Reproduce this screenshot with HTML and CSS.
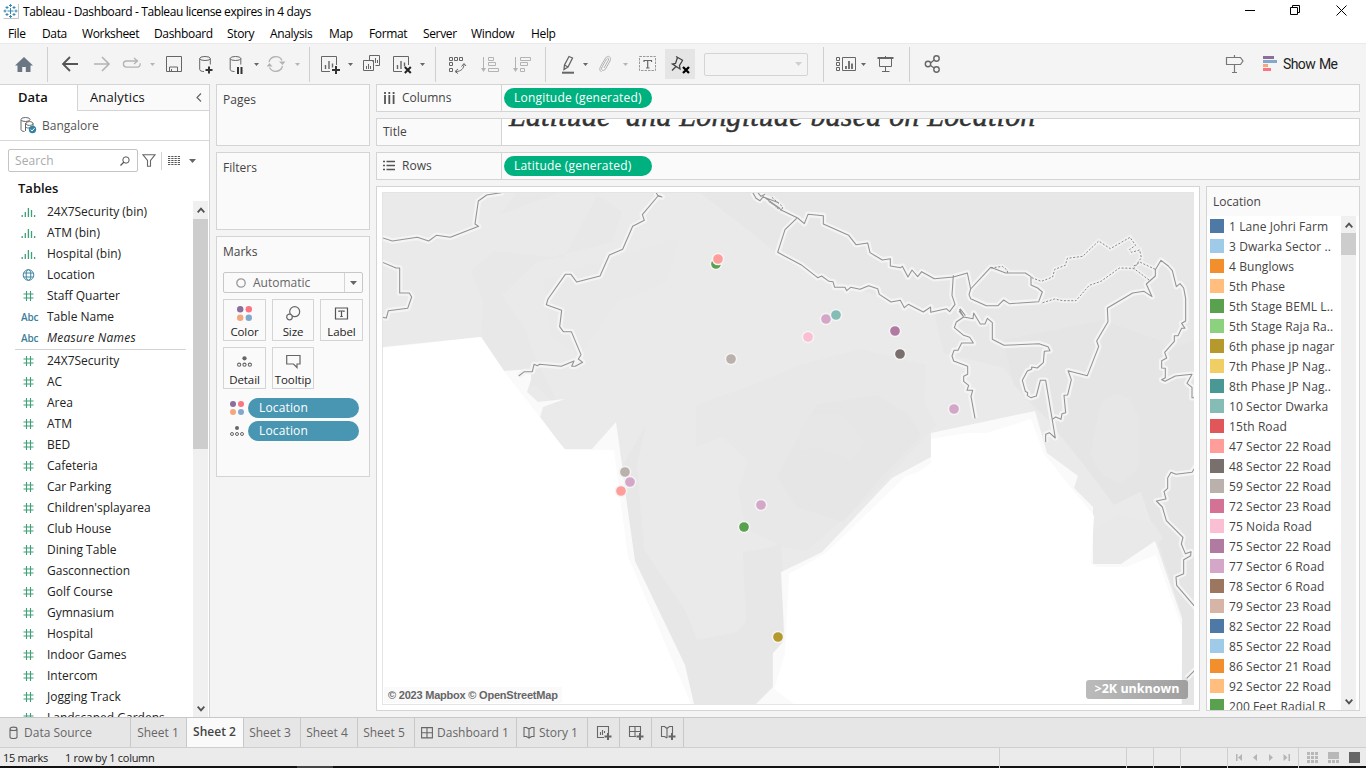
FILE: index.html
```html
<!DOCTYPE html>
<html lang="en">
<head>
<meta charset="utf-8">
<title>Tableau - Dashboard</title>
<link rel="stylesheet" href="styles.css">
</head>
<body>
<svg class="defs" width="0" height="0">
  <symbol id="hash" viewBox="0 0 12 12"><path d="M4 1v10M8 1v10M1 4h10M1 8h10" fill="none" stroke="#3fa078" stroke-width="1.1"/></symbol>
  <symbol id="bin" viewBox="0 0 14 12"><path d="M.7 9v2M3.8 6v5M6.9 2v9M10 4v7M13.1 9v2" fill="none" stroke="#3fa078" stroke-width="1.3"/></symbol>
  <symbol id="globe" viewBox="0 0 12 12"><g fill="none" stroke="#3e86a0"><circle cx="6" cy="6" r="5.300"/><ellipse cx="6" cy="6" rx="2.300" ry="5.300"/><path d="M1.500 4h9M1.500 8h9"/></g></symbol>
  <symbol id="caret" viewBox="0 0 7 4"><path d="M0 0h7L3.500 4z" fill="currentColor"/></symbol>
  <symbol id="up" viewBox="0 0 8 6"><path d="M.7 5.300L4 1.700l3.300 3.600" fill="none" stroke="#505050" stroke-width="1.800"/></symbol>
  <symbol id="down" viewBox="0 0 8 6"><path d="M.7.7L4 4.300 7.300.7" fill="none" stroke="#505050" stroke-width="1.800"/></symbol>
  <symbol id="dots4" viewBox="0 0 14 14"><circle cx="3" cy="3" r="3" fill="#8a6f9c"/><circle cx="11" cy="3" r="3" fill="#fb7482"/><circle cx="3" cy="11" r="3" fill="#f4a77b"/><circle cx="11" cy="11" r="3" fill="#84a7cd"/></symbol>
  <symbol id="detail" viewBox="0 0 14 12"><circle cx="7" cy="3" r="2" fill="#666"/><g fill="none" stroke="#666"><circle cx="2" cy="9" r="1.500"/><circle cx="7" cy="9" r="1.500"/><circle cx="12" cy="9" r="1.500"/></g></symbol>
</svg>

<header class="titlebar">
  <svg class="logo" viewBox="0 0 16 16" width="16" height="16"><path d="M.5 15.500h15V1" fill="none" stroke="#c4c4c4"/><path d="M7.500 5v6M4.500 8h6M7.500 1v3M6 2.500h3M7.500 12v3M6 13.500h3M2 6.500v3M.5 8h3M13 6.500v3M11.500 8h3M4 3v3M2.500 4.500h3M11 3v3M9.500 4.500h3M4 10v3M2.500 11.500h3M11 10v3M9.500 11.500h3" fill="none" stroke="#3889b3"/></svg>
  <span class="apptitle">Tableau - Dashboard - Tableau license expires in 4 days</span>
  <svg class="winbtns" viewBox="1240 0 126 22" width="126" height="22" fill="none" stroke="#000"><path d="M1245 10.500h10M1290.500 7.500h7v7h-7zM1292.500 7v-1.500h7v7h-2M1336.500 5.500l10 10M1346.500 5.500l-10 10"/></svg>
</header>
<nav class="menu">
  <span>File</span><span>Data</span><span>Worksheet</span><span>Dashboard</span><span>Story</span><span>Analysis</span><span>Map</span><span>Format</span><span>Server</span><span>Window</span><span>Help</span>
</nav>

<div class="toolbar">
  <svg viewBox="14 54 20 20"><path d="M15 65.500L24 57l9 8.500h-2.500V72h-4.700v-5h-3.600v5h-4.700v-6.500z" fill="#6b7683" stroke="none"/></svg>
  <i class="sep"></i>
  <svg viewBox="61 54 20 20"><path d="M78 64H63M70 57l-7 7 7 7" stroke="#555" stroke-width="1.800"/></svg>
  <svg viewBox="93 54 20 20" class="off"><path d="M94 64h15M102 57l7 7-7 7" stroke-width="1.600"/></svg>
  <svg viewBox="122 54 20 20" class="off"><path d="M137 61h-10.500a3 3 0 0 0 0 6.200h10.500a3 3 0 0 0 3-4M134 58l3.500 3-3.500 3" stroke-width="1.300"/></svg>
  <svg class="dd off"><use href="#caret"/></svg>
  <svg viewBox="165 54 20 20"><path d="M166.500 56.500h15v15h-15zM169.500 71v-4h8v4M171.500 69v2"/></svg>
  <svg viewBox="197 54 20 20"><ellipse cx="205" cy="58.500" rx="5.300" ry="2"/><path d="M199.700 58.500v11c0 1.200 1.800 2 4.300 2M210.300 58.500v6"/><path d="M209 66.500v7M205.500 70h7" stroke="#333" stroke-width="2"/></svg>
  <svg viewBox="228 54 20 20"><ellipse cx="235.500" cy="58.500" rx="5.300" ry="2"/><path d="M230.200 58.500v11c0 1.200 1.800 2 4.300 2M240.800 58.500v6"/><path d="M238 67v7M241.500 67v7" stroke="#333" stroke-width="2"/></svg>
  <svg class="dd"><use href="#caret"/></svg>
  <svg viewBox="267 54 20 20" class="off"><path d="M269 62a7 7 0 0 1 13-1.500M282.500 66a7 7 0 0 1-13 1.500" stroke-width="1.300"/><path d="M279 61.500h6.500l-3 3.500zM266.500 66.500h6l-3-3.500z" fill="#b3b3b3" stroke="none"/></svg>
  <svg class="dd off"><use href="#caret"/></svg>
  <i class="sep"></i>
  <svg viewBox="320 54 20 20"><path d="M330 71.500h-8.500v-15h15v8.500"/><path d="M325.500 65v4M329 61v8M332.500 63.500v4" stroke-width="1.400"/><path d="M336 66v8M332 70h8" stroke="#333" stroke-width="2"/></svg>
  <svg class="dd"><use href="#caret"/></svg>
  <svg viewBox="362 54 20 20"><path d="M369.500 60v-4.500h10v10h-4M363.500 60.500h10v10h-10zM366.500 66v3M368.500 64v5M370.500 66v3M373 60v2M375.500 58v5M377.500 60v3"/></svg>
  <svg viewBox="392 54 20 20"><path d="M402 71.500h-8.500v-15h15v8.500"/><path d="M397.500 65v4M401 61v8M404.500 62.500v4" stroke-width="1.400"/><path d="M404.800 67l6 6M410.800 67l-6 6" stroke="#222" stroke-width="2"/></svg>
  <svg class="dd"><use href="#caret"/></svg>
  <i class="sep"></i>
  <svg viewBox="448 54 20 20"><path d="M449.500 57.500h3v3h-3zM454.500 57.500h3v3h-3zM459.500 57.500h3v3h-3zM449.500 62.500h3v3h-3zM449.500 68.500h3v3h-3zM464 64c0 4.500-3 7.500-8 7.500M461.500 66.500l2.500-3 2 2.500M458 69l-3 2.500 3 2"/></svg>
  <svg viewBox="480 54 20 20" class="off"><path d="M483.500 57v13M488.500 57.500h5v3h-5zM488.500 62.500h7v3h-7zM488.500 68.500h10v3h-10z"/><path d="M481 68h5l-2.500 4z" fill="#b3b3b3" stroke="none"/></svg>
  <svg viewBox="512 54 20 20" class="off"><path d="M515.500 57v13M520.500 57.500h10v3h-10zM520.500 62.500h7v3h-7zM520.500 68.500h4v3h-4z"/><path d="M513 68h5l-2.500 4z" fill="#b3b3b3" stroke="none"/></svg>
  <i class="sep"></i>
  <svg viewBox="561 54 20 20"><path d="M569 56.500l3.500 1.500-4.500 9-4 2.500.5-4.500zM564.500 65l3.500 2" stroke-width="1.300"/><path d="M562 72.700h12" stroke-width="2"/></svg>
  <svg class="dd"><use href="#caret"/></svg>
  <svg viewBox="598 54 20 20" class="off"><path d="M604 68l4.500-8c.9-2-1-2.500-1.900-1l-4.600 8c-1.500 3 1.500 5 3.500 2l4.500-8c2-4-2-6.500-4.500-3l-5 8.500c-1.500 3-.5 5 1 5"/></svg>
  <svg class="dd off"><use href="#caret"/></svg>
  <svg viewBox="638 54 20 20"><rect x="639.500" y="56.500" width="16" height="14" stroke="#999" stroke-dasharray="2.500 1"/><path d="M644 62v-1.500h7.500v1.500M647.700 60.500v7.500M646 68h3.500" stroke-width="1.200"/></svg>
  <span class="pin"><svg viewBox="670 54 20 20"><path d="M676 56.500l7 4M677.500 57.500l-2 6-3 .5 7.500 5-.5-3.500 3-5M676 66.500l-4 4" stroke="#444" stroke-width="1.300"/><path d="M683 67l6 6M689 67l-6 6" stroke="#000" stroke-width="2.300"/></svg></span>
  <span class="select"><svg class="dd"><use href="#caret"/></svg></span>
  <i class="sep"></i>
  <svg class="wide" viewBox="835 54 22 20"><path d="M836.500 57.500h3v3h-3zM836.500 62.500h3v3h-3zM836.500 67.500h3v3h-3zM842.500 57.500h13v13h-13z"/><path d="M846 66v3M849 61v8M852 63.500v5.500" stroke-width="1.800"/></svg>
  <svg class="dd"><use href="#caret"/></svg>
  <svg viewBox="876 54 20 20"><path d="M877.500 58h16" stroke-width="2"/><path d="M879.500 58v8.500h12V58M885.500 56v2M885.500 67v5M882 71.500h7.500"/></svg>
  <i class="sep"></i>
  <svg viewBox="924 54 20 20"><g stroke-width="1.400"><circle cx="936.500" cy="58.500" r="2.700"/><circle cx="928" cy="64" r="2.700"/><circle cx="936.500" cy="69.500" r="2.700"/><path d="M930.500 63l3.700-3M930.500 65.500l3.700 2.500"/></g></svg>
  <svg viewBox="1225 54 20 20"><path d="M1226.500 57.500h14l2.500 3.500-2.500 3.500h-14zM1234.500 55v2.500M1234.500 64.500v7.500M1232 72.500h5" stroke="#777" stroke-width="1.200"/></svg>
  <span class="showme"><svg width="16" height="16" viewBox="0 0 16 16" stroke="none"><path d="M1 0h11v3H1z" fill="#8a6f9c"/><path d="M1 4h14v3H1z" fill="#84a7cd"/><path d="M1 8h5v3H1z" fill="#f4a77b"/><path d="M1 12h8v3H1z" fill="#fb7482"/></svg><b>Show Me</b></span>
</div>

<main class="work">
  <aside class="data">
    <div class="ptabs"><b>Data</b><span>Analytics<svg width="6" height="9" viewBox="0 0 6 9"><path d="M5 .5l-4 4 4 4" fill="none" stroke="#666" stroke-width="1.200"/></svg></span></div>
    <div class="source"><svg width="18" height="17" viewBox="0 0 18 17"><g fill="none" stroke="#666"><ellipse cx="5.500" cy="2.500" rx="4.500" ry="2"/><path d="M1 3v9.500c0 1 1.500 2 3.500 2M6 6.500c0-2.500 7-2.500 7 0s-7 2.500-7 0M5.500 6v8M13 6.500V9M5.500 9.500c1 2 3 1.500 4 1.300"/></g><circle cx="12.500" cy="12.500" r="3.700" fill="#3483a2"/><path d="M10.700 12.500l1.400 1.500 2.400-2.800" fill="none" stroke="#fff"/></svg><span>Bangalore</span></div>
    <div class="searchrow">
      <div class="search"><span>Search</span><svg width="10" height="10" viewBox="0 0 10 10"><path d="M4 6L.5 9.500" stroke="#555" stroke-width="1.200"/><circle cx="6" cy="4" r="3.200" fill="none" stroke="#555"/></svg></div>
      <svg class="funnel" width="14" height="13" viewBox="0 0 14 13"><path d="M.8.7h12.400L8.500 6.500v5.700h-3V6.500z" fill="none" stroke="#666" stroke-width="1.100"/></svg>
      <i></i>
      <svg class="grid" width="12" height="10" viewBox="0 0 12 10"><path d="M0 .5h12M0 2.500h12M0 4.500h12M0 6.500h12M0 8.500h12" stroke="#555" stroke-dasharray="2.250 1" stroke-width="1"/></svg>
      <svg class="dd"><use href="#caret"/></svg>
    </div>
    <h3>Tables</h3>
    <div class="fieldwrap">
      <ul class="fields">
        <li><svg><use href="#bin"/></svg>24X7Security (bin)</li>
        <li><svg><use href="#bin"/></svg>ATM (bin)</li>
        <li><svg><use href="#bin"/></svg>Hospital (bin)</li>
        <li><svg><use href="#globe"/></svg>Location</li>
        <li><svg><use href="#hash"/></svg>Staff Quarter</li>
        <li><em class="abc">Abc</em>Table Name</li>
        <li class="it"><em class="abc">Abc</em>Measure Names</li>
        <li class="line"></li>
        <li><svg><use href="#hash"/></svg>24X7Security</li>
        <li><svg><use href="#hash"/></svg>AC</li>
        <li><svg><use href="#hash"/></svg>Area</li>
        <li><svg><use href="#hash"/></svg>ATM</li>
        <li><svg><use href="#hash"/></svg>BED</li>
        <li><svg><use href="#hash"/></svg>Cafeteria</li>
        <li><svg><use href="#hash"/></svg>Car Parking</li>
        <li><svg><use href="#hash"/></svg>Children'splayarea</li>
        <li><svg><use href="#hash"/></svg>Club House</li>
        <li><svg><use href="#hash"/></svg>Dining Table</li>
        <li><svg><use href="#hash"/></svg>Gasconnection</li>
        <li><svg><use href="#hash"/></svg>Golf Course</li>
        <li><svg><use href="#hash"/></svg>Gymnasium</li>
        <li><svg><use href="#hash"/></svg>Hospital</li>
        <li><svg><use href="#hash"/></svg>Indoor Games</li>
        <li><svg><use href="#hash"/></svg>Intercom</li>
        <li><svg><use href="#hash"/></svg>Jogging Track</li>
        <li><svg><use href="#hash"/></svg>Landscaped Gardens</li>
      </ul>
      <div class="scroll"><svg><use href="#up"/></svg><div class="thumb tall"></div><svg class="end"><use href="#down"/></svg></div>
    </div>
  </aside>

  <section class="cards">
    <div class="card pages">Pages</div>
    <div class="card filters">Filters</div>
    <div class="card marks">Marks
      <div class="marktype"><svg width="10" height="10" viewBox="0 0 10 10"><circle cx="5" cy="5" r="4.200" fill="none" stroke="#999" stroke-width="1.300"/></svg><span>Automatic</span><u><svg class="dd"><use href="#caret"/></svg></u></div>
      <div class="markbtns">
        <div><svg width="15" height="15"><use href="#dots4"/></svg>Color</div>
        <div><svg width="15" height="15" viewBox="0 0 15 15"><g fill="none" stroke="#666" stroke-width="1.200"><circle cx="8.700" cy="5.700" r="5"/><circle cx="3.500" cy="11" r="2.800" fill="#fafafa"/></g></svg>Size</div>
        <div><svg width="15" height="15" viewBox="0 0 15 15"><path d="M1.500 2h12v11h-12zM5 6V5h5v1M7.500 5v5.500M6.200 10.500h2.600" fill="none" stroke="#555" stroke-width="1.200"/></svg>Label</div>
        <div><svg width="15" height="15"><use href="#detail"/></svg>Detail</div>
        <div><svg width="15" height="15" viewBox="0 0 15 15"><path d="M.7 1.500h13.300v8.500h-3v3.500L7.500 10H.7z" fill="none" stroke="#666" stroke-width="1.200"/></svg>Tooltip</div>
      </div>
      <div class="mp"><svg width="14" height="14"><use href="#dots4"/></svg><span>Location</span></div>
      <div class="mp"><svg width="14" height="12"><use href="#detail"/></svg><span>Location</span></div>
    </div>
  </section>

  <section class="sheet">
    <div class="shelf"><label><svg width="12" height="12" viewBox="0 0 12 12"><path d="M2 0v2M2 3v9M6.300 0v2M6.300 3v9M10.600 0v2M10.600 3v9" stroke="#555" stroke-width="1.800"/></svg>Columns</label><span class="pill">Longitude (generated)</span></div>
    <div class="shelf title"><label>Title</label><h1>Latitude  and Longitude based on Location</h1></div>
    <div class="shelf"><label><svg width="12" height="12" viewBox="0 0 12 12"><path d="M0 1.500h2M3.500 1.500H12M0 5.500h2M3.500 5.500H12M0 9.500h2M3.500 9.500H12" stroke="#555" stroke-width="1.700"/></svg>Rows</label><span class="pill">Latitude (generated)</span></div>
    <div class="viewrow">
      <div class="view">
        <div class="map">
          <svg viewBox="383 193 811 512" width="811" height="512">
            <rect x="383" y="193" width="811" height="512" fill="#eaeaea"/>
            <!-- terrain shading -->
            <g fill="#e7e7e7">
              <path d="M500 215l12-5 50-18h30l30 20-10 30-60 15-22-2-36-4-23 20 12 30-3 50 20 42 36-7 25 24-29-60-6-20-24-35 36-34 26-4 30-55 20-60h-60z" fill="#e8e8e8"/>
              <path d="M700 193h494v250l-45-20-60 30-55-45-30-40-60-15-10-40-65-20-80-30-50-40z" fill="#e7e7e7"/>
              <path d="M640 250l40-12-15 45-50 20-35 52-30-20-6-56z" fill="#e9e9e9"/>
              <path d="M696 405l56-20 48-20 60-16 66 16-2 38 12 22-60 66-70 60-22-4-38-18-8-38 10-30-26-24-26 10z" fill="#e8e8e8"/>
              <path d="M623 465l23-40-9 40 7 85 41 60 12 30 40-8 9-10-3-70 30-5 8-5 4 56-3 45-10 12v32l-18 20h-78l-8-40-51-103z"/>
              <path d="M1040 400l154-60v365h-12v-90l-27-81-15-45-65-50z" fill="#e5e5e5"/>
            </g>
            <g fill="#e5e5e5">
              <path d="M797 440l20-35 60-10 32 20 12 20-40 42-38 45-46-15-20-30z" fill="#e6e6e6"/>
              <path d="M1003 340l100-20 55 20 36 30v75l-20 30-60 30-30-40-40-50-30-30z"/>
            </g>
            <g fill="#e7e7e7">
              <path d="M1101 402l14-8 14 4 10 20v50l-18 16-19-9-12-20z"/><path d="M800 430l12-16h30l24 28-14 18-35-12-17 2z"/>
            </g>
            <path d="M1093 530l25-15 35 8 10 15-8 10-34 20h-28z" fill="#e9e9e9"/>
            <!-- coastal shallows -->
            <g fill="#fafafa">
              <path d="M383 347l98-10 23 34 27-2v11l-4 12 11 10 27-3-22 8-4 14 26 28h27l24-27 6 43 4 32 9 64 50 104 9 39H383z"/>
              <path d="M756 704l17-17v-34l10-11 1-12-3-58 25-12 16-8 70-74 39-21v-24l104-22 12 42 31 23-4 12 19 19v57h28l34-23 27 78v85z"/>
            </g>
            <!-- open sea -->
            <g fill="#fff">
              <path d="M383 348l98-11 23 34 9 12 27 34 25 33h49l6 47 8 60 64 149H383z"/>
              <path d="M794 704l-20-15 11-35 4-80 25-14 14-9 78-75 12-4 13-9v-24l36-6 20 0 44-14 13 35 50 62-3 48 7 3h28l30-12 26 73-1 79z"/>
            </g>
            <!-- borders: pale halo below, thin line above -->
            <defs>
              <g id="borders" fill="none" stroke-linejoin="round">
                <g transform="translate(376 84) scale(.33333)">
                  <path d="M15 460l34 11 75-11 34 11 23-17 42 6 85-33-11-7 10-69 25-18 50-8M15 533l45 19h11v75h29l7 12-12 34-58 7-6 22-16-3M840 325l5 9 13 5-12-3-47 56 6 17-35 18-30 69-40 17-28 63-70 18-17-23h-17l-52 74-5 17 46 17-6 49 11 15h24l29 69-8 13 13 10-22 12h-11l7-16-38 16-65-6-7 4-10-4-5 22h-24l-17 13M1130 325l10 18 12 7 10-12 50 35M1160 338l48 18M1145 325l10 12 12-6"/>
                </g>
                <g transform="translate(776 180) scale(.33333)">
                  <path d="M-22 64L20 92l45 22 20 17 11-28 46 4v25l76 34 22 28 35-5 7 29 37 22 24-4v22l31 5 5-4 17 32 12-21 17 20 12-15 38 21 57-5 42-12 10 48 60-65 45 17h59l17 11v25l20 9 14 12-11 29-88 6-17-11-17 17h-35l-47-21-5-12 5-17M62 115l-35 34L5 217l70 37 50 39 12-5 22 16 12 1 5 17h31l5 10 12-10 28 6 26-11 27 9 5 17 35 23 28-5 12 22 12-10 45 23 22-15v16l47-11 10 9 16-22-9-27 4-60M550 388l13 23 28 5 2-17 20 33h14l7-17 15 13v50l35 18 105-5 27 9 6 12-17 2-3 34-18 16-17-3v7l-13 5-15 28 9 33 7 4-1 9 10 6 17-5 12-47h16l29 173-18-16-11 5v23M829 718l10-7 16 7 3-17 11-3-5-52 11-1 11-46-10-27 58 15 34-87-6-17 34-58-2-41 76-45 34-5 24 16-17-38 27-24v-19l17-28 22 17 12 14 12 48 11-9 11 13 6 32v67l-12 7 10 15h-10l-11 22h-11v17l-29 33 6 17-15 8v22l11 1v28l-11 6 10 5 31-16 50-5-15 27 15 12v31h9M563 411l-22 15-6 17 28 23 18 6 11 17h-35l-11 22h-12l-6 17 5 15 42 16v24l-12 6v15l15 12-5 15h17l-5 18 12 66M563 411l-13-17 3-7 15 20"/>
                </g>
                <g transform="translate(800 400) scale(.33333)">
                  <path d="M1190 195l-14 22-48 6-15-6-10 17v31l-11 10 6 22-29 6 18 18 12 41 50 50-5 20 12 29 17-6-1 12-21 12v42l-23 10 2 25 60 70M1190 805l-30 30"/>
                </g>
              </g>
              <g id="disputed" fill="none">
                <path transform="translate(776 180) scale(.33333)" d="M-12 52l18 16 14 12-3 12-20-12M645 264l34-5 15 12 1 11M767 293l29 11 34-13 6-23 32-12 6-21 46-6 48-46 35 23 59-34 17 24-18 12 5 9 25-7 5 23-24 35M800 368l36-11 24 5h40l40-46 35-12 55-40 43 1 50 38M1073 258l20-11 45 21"/>
              </g>
            </defs>
            <use href="#borders" stroke="#f4f4f4" stroke-width="17"/>
            <use href="#disputed" stroke="#f1f1f1" stroke-width="14"/>
            <use href="#borders" stroke="#939393" stroke-width="3.200"/>
            <use href="#disputed" stroke="#888" stroke-width="3" stroke-dasharray="6 5"/>
            <g stroke="#f4f4f4" stroke-width="1.500">
              <circle cx="716" cy="264" r="5.600" fill="#59a14f"/><circle cx="718" cy="259" r="5.600" fill="#ff9d9a"/>
              <circle cx="826" cy="319" r="5.600" fill="#d4a6c8"/><circle cx="836" cy="315" r="5.600" fill="#86bcb6"/>
              <circle cx="808" cy="337" r="5.600" fill="#fabfd2"/><circle cx="895" cy="331" r="5.600" fill="#b07aa1"/>
              <circle cx="900" cy="354" r="5.600" fill="#79706e"/><circle cx="731" cy="359" r="5.600" fill="#bab0ac"/>
              <circle cx="954" cy="409" r="5.600" fill="#d4a6c8"/><circle cx="625" cy="472" r="5.600" fill="#bab0ac"/>
              <circle cx="630" cy="482" r="5.600" fill="#d4a6c8"/><circle cx="621" cy="491" r="5.600" fill="#ff9d9a"/>
              <circle cx="761" cy="505" r="5.600" fill="#d4a6c8"/><circle cx="744" cy="527" r="5.600" fill="#59a14f"/>
              <circle cx="778" cy="637" r="5.600" fill="#b6992d"/>
            </g>
          </svg>
          <div class="credit">© 2023 Mapbox © OpenStreetMap</div>
          <div class="unknown">&gt;2K unknown</div>
        </div>
      </div>
      <div class="legend">
        <h4>Location</h4>
        <div class="lwrap">
          <ul>
            <li><i class="c1"></i>1 Lane Johri Farm</li>
            <li><i class="c2"></i>3 Dwarka Sector ..</li>
            <li><i class="c3"></i>4 Bunglows</li>
            <li><i class="c4"></i>5th Phase</li>
            <li><i class="c5"></i>5th Stage BEML L..</li>
            <li><i class="c6"></i>5th Stage Raja Ra..</li>
            <li><i class="c7"></i>6th phase jp nagar</li>
            <li><i class="c8"></i>7th Phase JP Nag..</li>
            <li><i class="c9"></i>8th Phase JP Nag..</li>
            <li><i class="c10"></i>10 Sector Dwarka</li>
            <li><i class="c11"></i>15th Road</li>
            <li><i class="c12"></i>47 Sector 22 Road</li>
            <li><i class="c13"></i>48 Sector 22 Road</li>
            <li><i class="c14"></i>59 Sector 22 Road</li>
            <li><i class="c15"></i>72 Sector 23 Road</li>
            <li><i class="c16"></i>75 Noida Road</li>
            <li><i class="c17"></i>75 Sector 22 Road</li>
            <li><i class="c18"></i>77 Sector 6 Road</li>
            <li><i class="c19"></i>78 Sector 6 Road</li>
            <li><i class="c20"></i>79 Sector 23 Road</li>
            <li><i class="c1"></i>82 Sector 22 Road</li>
            <li><i class="c2"></i>85 Sector 22 Road</li>
            <li><i class="c3"></i>86 Sector 21 Road</li>
            <li><i class="c4"></i>92 Sector 22 Road</li>
            <li><i class="c5"></i>200 Feet Radial R</li>
          </ul>
          <div class="scroll"><svg><use href="#up"/></svg><div class="thumb short"></div><svg class="end"><use href="#down"/></svg></div>
        </div>
      </div>
    </div>
  </section>
</main>

<footer>
  <div class="tabs">
    <span><svg width="10" height="14" viewBox="0 0 10 14"><path d="M1 3c0-2.500 7-2.500 7 0v8c0 2-7 2-7 0zM1 3c0 2 7 2 7 0"/></svg>Data Source</span>
    <span class="first">Sheet 1</span><span class="on">Sheet 2</span><span>Sheet 3</span><span>Sheet 4</span><span>Sheet 5</span>
    <span class="ic"><svg width="12" height="12" viewBox="0 0 12 12"><path d="M.6.6h10.800v10.300H.6zM6 .6v10.300M.6 5.800h10.800"/></svg>Dashboard 1</span>
    <span class="ic"><svg width="12" height="13" viewBox="0 0 12 13"><path d="M6 3L3.500 1.500H1v9h2.500L6 12l2.500-1.500H11v-9H8.500zM6 3v9"/></svg>Story 1</span>
    <span class="new"><svg width="16" height="16" viewBox="0 0 16 16"><path d="M8 12.500H1.500v-11h11V8M4.500 7v3M6.500 5v5M8.500 6v2"/><path d="M12 8v7M8.500 11.500h7" stroke-width="2"/></svg></span>
    <span class="new"><svg width="16" height="16" viewBox="0 0 16 16"><path d="M8 11.500H1.500v-10h11V8M7 1.500v10M1.500 6.500h11"/><path d="M12 8v7M8.500 11.500h7" stroke-width="2"/></svg></span>
    <span class="new"><svg width="16" height="16" viewBox="0 0 16 16"><path d="M7 3.500L4.500 1.500H1.500v10h3L7 13M7 3.500l2.500-2h3V8M7 3.500V13"/><path d="M12 8v7M8.500 11.500h7" stroke-width="2"/></svg></span>
  </div>
  <div class="status">
    <span>15 marks</span><span>1 row by 1 column</span><i></i><i></i><i></i><i></i>
    <span class="nav"><svg width="70" height="18" viewBox="1228 748 70 18" fill="#b5b5b5"><path d="M1236 754h1.500v7H1236zM1242 754v7l-4-3.500zM1257 754v7l-4-3.500zM1269 754v7l4-3.500zM1283.500 754v7l4-3.500zM1288.500 754h1.500v7h-1.500z"/></svg></span>
    <span class="views"><svg width="67" height="18" viewBox="1299 748 67 18"><path d="M1307 753.500h11M1307 757.500h11M1307 761.500h11" stroke="#b8b8b8" stroke-width="3" stroke-dasharray="3 1"/><path d="M1328 752h11v7h-11z" fill="#b8b8b8"/><path d="M1328 761.500h11" stroke="#b8b8b8" stroke-width="3" stroke-dasharray="3 1"/><path d="M1349 752h11v11h-11z" fill="#666"/></svg></span>
  </div>
  <div class="task"><i></i></div>
</footer>
</body>
</html>
```
FILE: styles.css
```css
* { box-sizing: border-box; }
body { margin: 0; width: 1366px; height: 768px; overflow: hidden; display: flex; flex-direction: column; background: #f4f4f4; font: 12px/16px "Open Sans", "Noto Sans", sans-serif; color: #222; white-space: nowrap; }
ul { list-style: none; margin: 0; padding: 0; }
svg { display: block; flex: none; }
.defs { position: absolute; }

.titlebar { display: flex; height: 24px; flex: none; background: #fff; padding-left: 3px; color: #000; }
.logo { margin-top: 3px; }
.apptitle { margin: 4px auto 0 4px; letter-spacing: -0.38px; }
.menu { display: grid; grid-template-columns: 34px 40px 72px 73px 43px 59px 40px 54px 48px 60px 40px; height: 19px; flex: none; background: #fff; padding: 2px 0 0 8px; color: #000; letter-spacing: -0.35px; }

.toolbar { flex: none; height: 41px; border-top: 1px solid #eaeaea; display: grid; align-items: center; justify-items: start; padding-left: 14px; grid-template-columns: 33px 14px 32px 29px 27px 16px 32px 31px 25px 14px 27px 15px 11px 27px 15px 30px 27px 16px 13px 32px 32px 33px 16px 21px 16px 24px 16px 27px 39px 119px 12px 25px 16px 33px 15px 301px 37px 104px; }
.toolbar svg { width: 20px; height: 20px; fill: none; stroke: #666; }
.toolbar .wide { width: 22px; }
.toolbar .off { stroke: #b3b3b3; color: #b3b3b3; }
.sep { width: 1px; height: 35px; background: #cfcfcf; }
svg.dd, .toolbar svg.dd { width: 5px; height: 3px; stroke: none; color: #666; }
.toolbar svg.dd { margin-left: 1px; }
.toolbar svg.dd.off { color: #b5b5b5; }
.pin { width: 30px; height: 30px; background: #e5e5e5; padding: 5px; }
.select { width: 104px; height: 23px; border: 1px solid #d4d4d4; border-radius: 2px; display: flex; align-items: center; justify-content: flex-end; padding-right: 5px; }
.toolbar .select svg.dd { width: 7px; height: 4px; color: #cfcfcf; }
.showme { display: flex; gap: 5px; align-items: center; }
.toolbar .showme svg { width: 16px; height: 16px; stroke: none; }
.showme b { font: 14px/20px Roboto, sans-serif; color: #222; letter-spacing: -0.6px; word-spacing: 1px; }

.work { height: 633px; flex: none; display: flex; }
.data { width: 210px; background: #fff; border-top: 1px solid #d4d4d4; border-right: 1px solid #d4d4d4; display: flex; flex-direction: column; overflow: hidden; }
.ptabs { display: flex; height: 26px; flex: none; font-size: 13px; line-height: 25px; color: #111; }
.ptabs b { width: 77px; padding-left: 18px; font-weight: 600; }
.ptabs span { flex: 1; display: flex; align-items: center; justify-content: space-between; padding: 0 7px 0 12px; background: #fafafa; border-left: 1px solid #d4d4d4; border-bottom: 1px solid #d4d4d4; letter-spacing: .15px; }
.source { display: flex; align-items: center; gap: 4px; height: 30px; flex: none; padding-left: 20px; border-bottom: 1px solid #d9d9d9; color: #555; }
.searchrow { display: flex; align-items: center; height: 23px; flex: none; margin: 8px 0 0 8px; }
.search { width: 130px; height: 23px; border: 1px solid #c4c4c4; border-radius: 2px; display: flex; align-items: center; justify-content: space-between; padding: 1px 7px 0 6px; color: #aaa; letter-spacing: .1px; }
.funnel { margin-left: 4px; }
.searchrow i { width: 1px; height: 18px; background: #d4d4d4; margin: 0 6px 0 5px; }
.searchrow svg.dd { width: 7px; height: 4px; margin-left: 9px; }
h3 { margin: 8px 0 6px 18px; font-size: 13px; line-height: 17px; height: 15px; font-weight: 600; color: #111; }
.fieldwrap { flex: 1; min-height: 0; display: flex; }
.fields { width: 193px; overflow: hidden; }
.fields li { display: flex; align-items: center; height: 21px; padding-left: 21px; }
.fields li > svg { width: 15px; height: 12px; margin-right: 11px; }
.fields .line { height: 1px; margin: 1px 7px 0 15px; background: #d4d4d4; }
.fields .it { font-style: italic; letter-spacing: .25px; }
.abc { width: 26px; font: 600 10px "Open Sans", sans-serif; letter-spacing: -0.2px; color: #3e7f9b; }
.scroll { width: 15px; background: #f0f0f0; display: flex; flex-direction: column; align-items: center; padding: 6px 0 5px; }
.scroll svg { width: 8px; height: 6px; }
.thumb { width: 15px; background: #cdcdcd; }
.tall { height: 230px; margin-top: 6px; }
.short { height: 22px; margin-top: 5px; }
.end { margin-top: auto; }

.cards { margin-left: 6px; width: 154px; display: flex; flex-direction: column; gap: 6px; color: #444; }
.card { border: 1px solid #d4d4d4; background: #fafafa; padding: 7px 6px; }
.pages { height: 62px; }
.filters { height: 78px; }
.marks { height: 241px; }
.marktype { display: flex; align-items: center; height: 21px; width: 140px; margin-top: 12px; border: 1px solid #c8c8c8; border-radius: 2px; padding-left: 12px; color: #666; }
.marktype span { margin-left: 7px; padding-top: 1px; }
.marktype u { margin-left: auto; width: 18px; height: 19px; border-left: 1px solid #d4d4d4; display: grid; place-content: center; }
.marktype u svg.dd { width: 7px; height: 4px; }
.markbtns { display: grid; grid-template-columns: 43px 42px 43px; column-gap: 6px; row-gap: 6px; margin-top: 6px; color: #222; font-size: 11.500px; letter-spacing: -0.1px; }
.markbtns div { height: 42px; border: 1px solid #d4d4d4; display: flex; flex-direction: column; align-items: center; justify-content: space-between; padding: 6px 0 0; }
.mp { display: flex; align-items: center; height: 20px; margin: 9px 0 0 7px; gap: 4px; }
.mp + .mp { margin-top: 3px; }
.mp span { width: 111px; height: 20px; border-radius: 10px; background: #4996b2; color: #fff; padding: 2px 11px; letter-spacing: .15px; }

.sheet { margin-left: 6px; width: 984px; display: flex; flex-direction: column; gap: 6px; }
.shelf { height: 28px; flex: none; display: flex; border: 1px solid #d4d4d4; background: #fafafa; }
.shelf label { width: 125px; border-right: 1px solid #d4d4d4; display: flex; align-items: center; gap: 7px; padding-left: 6px; color: #444; }
.pill { margin: 3px 0 0 2px; width: 148px; height: 20px; border-radius: 10px; background: #00b180; color: #fff; padding: 2px 10px; letter-spacing: .2px; }
.title { background: #fff; overflow: hidden; }
.title label { background: #fafafa; }
h1 { margin: -19px 0 0 7px; font: italic 400 30px/32px "Liberation Serif", serif; color: #333; white-space: pre; letter-spacing: .2px; -webkit-text-stroke: .5px #333; }
.viewrow { display: flex; gap: 6px; height: 525px; }
.view { width: 824px; background: #fff; border: 1px solid #d4d4d4; padding: 5px; }
.map { position: relative; width: 812px; height: 513px; border: 1px solid #e4e4e4; border-right: 0; overflow: hidden; }
.credit { position: absolute; left: 1px; bottom: 1px; background: #fafafa; padding: 0 4px; font: bold 11px/16px "Liberation Sans", sans-serif; letter-spacing: -0.21px; color: #666; }
.unknown { position: absolute; right: 6px; bottom: 5px; width: 102px; height: 19px; border-radius: 3px; background: linear-gradient(90deg, #bbb, #9f9f9f); color: #fff; font: bold 12.500px/18px "Open Sans", sans-serif; text-align: center; }
.legend { width: 154px; border: 1px solid #d4d4d4; background: #fff; display: flex; flex-direction: column; }
h4 { margin: 0; height: 29px; flex: none; background: #fafafa; padding: 7px 6px; font-size: 12px; font-weight: 400; color: #444; }
.lwrap { flex: 1; min-height: 0; display: flex; justify-content: space-between; background: #fff; padding-right: 3px; }
.lwrap ul { width: 134px; overflow: hidden; padding-left: 3px; color: #444; }
.lwrap li { display: flex; align-items: center; height: 20px; padding-top: 2px; gap: 5px; letter-spacing: .08px; }
.lwrap li i { width: 14px; height: 14px; margin-bottom: 2px; }
.c1 { background: #4e79a7; } .c2 { background: #a0cbe8; } .c3 { background: #f28e2b; } .c4 { background: #ffbe7d; }
.c5 { background: #59a14f; } .c6 { background: #8cd17d; } .c7 { background: #b6992d; } .c8 { background: #f1ce63; }
.c9 { background: #499894; } .c10 { background: #86bcb6; } .c11 { background: #e15759; } .c12 { background: #ff9d9a; }
.c13 { background: #79706e; } .c14 { background: #bab0ac; } .c15 { background: #d37295; } .c16 { background: #fabfd2; }
.c17 { background: #b07aa1; } .c18 { background: #d4a6c8; } .c19 { background: #9d7660; } .c20 { background: #d7b5a6; }

footer { flex: none; height: 51px; }
.tabs { height: 30px; display: grid; grid-template-columns: 131px 56px 57px 57px 57px 57px 102px 71px 32px 32px 32px; background: #e6e6e6; border-top: 1px solid #c8c8c8; color: #666; }
.tabs span { display: flex; align-items: center; justify-content: center; gap: 4px; border-right: 1px solid #c8c8c8; padding-right: 4px; }
.tabs span:first-child { justify-content: flex-start; padding-left: 9px; gap: 5px; }
.tabs .first { padding-right: 1px; }
.tabs .ic { justify-content: flex-start; padding-left: 6px; }
.tabs .new { padding-right: 0; }
.tabs .on { background: #fafafa; font-weight: 600; color: #444; padding-right: 1px; padding-bottom: 2px; }
.tabs svg { fill: none; stroke: #666; stroke-width: 1.1px; }
.status { height: 19px; display: grid; grid-template-columns: 65px 935px 127px 27px 27px 47px 71px 67px; background: #ebebeb; border-top: 1px solid #cfcfcf; font-size: 11px; line-height: 20px; letter-spacing: -0.28px; }
.status span, .status i { border-right: 1px solid #cfcfcf; }
.status span:first-child { border: 0; padding-left: 3px; }
.status .views { border: 0; }
.task { height: 2px; background: #111; }
.task i { display: block; margin-left: 297px; width: 36px; height: 2px; background: #444; }
```
